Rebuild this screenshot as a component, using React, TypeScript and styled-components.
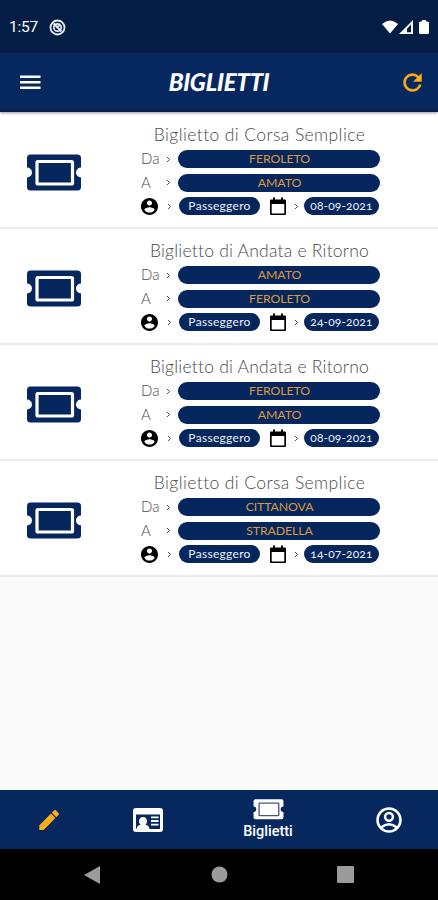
import React from "react";
import styled, { createGlobalStyle } from "styled-components";

const NAVY = "#06265e";
const BAR = "#07285f";
const GOLD = "#fcae17";

const GlobalStyle = createGlobalStyle`
  * { box-sizing: border-box; }
  body { margin: 0; background: #fafafa; font-family: Lato, "Liberation Sans", sans-serif; }
`;

const Screen = styled.div`
  width: 438px;
  height: 900px;
  display: flex;
  flex-direction: column;
  background: #fafafa;
  overflow: hidden;
`;

const StatusBar = styled.div`
  height: 53px;
  flex: none;
  padding: 1px 7px 0 9px;
  display: flex;
  align-items: center;
  background: #051e45;
  color: #fff;
  font: 400 15.5px Roboto, sans-serif;
  svg { display: block; }
`;

const Clock = styled.span`
  width: 40px;
  letter-spacing: -0.2px;
`;

const StatusIcons = styled.div`
  margin-left: auto;
  display: flex;
  align-items: center;
`;

const AppBar = styled.header`
  height: 59px;
  flex: none;
  display: grid;
  grid-template-columns: 42px 1fr 42px;
  align-items: center;
  padding: 0 12px 0 18px;
  background: ${BAR};
  border-bottom: 2px solid #052050;
  box-shadow: 0 1px 3px rgba(0, 0, 0, 0.4);
  z-index: 1;
  svg { display: block; }
  svg:last-child { justify-self: end; margin-top: 2px; }
`;

const Heading = styled.h1`
  margin: 0;
  text-align: center;
  color: #fff;
  font: italic 900 24.5px/30px Lato, sans-serif;
  letter-spacing: -0.2px;
  transform: translateX(-3px) scaleX(0.97) skewX(-2deg);
`;

const List = styled.main`
  flex: 1;
  padding-top: 1px;
`;

const Card = styled.article`
  height: 116px;
  display: grid;
  grid-template-columns: 115px 239px;
  column-gap: 26px;
  background: #fff;
  border-bottom: 2px solid #ebebeb;
`;

const Emblem = styled.div`
  padding: 41px 0 0 26px;
  svg { display: block; }
`;

const Details = styled.div`
  padding-top: 12px;
`;

const CardTitle = styled.h2<{ $spacing: number }>`
  margin: 0 -10px 5px;
  padding-right: 2px;
  text-align: center;
  white-space: nowrap;
  color: #4b4b4b;
  font: 300 17.5px/20px Lato, sans-serif;
  letter-spacing: ${(p) => p.$spacing}px;
`;

const Route = styled.div`
  height: 18px;
  margin-bottom: 5.5px;
  display: grid;
  grid-template-columns: 25px 11.5px 202px;
  align-items: center;
`;

const Label = styled.span`
  margin-top: -2px;
  color: #505050;
  font: 300 15px/18px Lato, sans-serif;
`;

const Station = styled.span`
  height: 18px;
  border-radius: 9px;
  background: ${NAVY};
  color: #dc9a3c;
  text-align: center;
  font: 400 12.3px/18px Lato, sans-serif;
  letter-spacing: -0.1px;
  padding-left: 2px;
`;

const Meta = styled.div`
  height: 18px;
  margin-top: -0.5px;
  display: grid;
  grid-template-columns: 26px 12px 81px 10px 24px 10px 75px;
  align-items: center;
  svg { display: block; }
`;

const Tag = styled.span<{ $spacing: number }>`
  height: 18px;
  border-radius: 9px;
  background: ${NAVY};
  color: #f0f2fa;
  text-align: center;
  white-space: nowrap;
  font: 400 12px/17px Lato, sans-serif;
  font-variant-numeric: oldstyle-nums;
  letter-spacing: ${(p) => p.$spacing}px;
`;

const CalendarCell = styled.span`
  grid-column: 5;
  margin-left: -1px;
`;

const TabBar = styled.nav`
  height: 59px;
  flex: none;
  display: grid;
  grid-template-columns: 97px 102px 138px 103px;
  background: ${BAR};
`;

const Tab = styled.div`
  display: flex;
  flex-direction: column;
  align-items: center;
  justify-content: center;
  svg { display: block; }
`;

const TabLabel = styled.span`
  margin-top: 4px;
  color: #fff;
  font: 500 14.5px/16px Roboto, sans-serif;
`;

const SystemBar = styled.div`
  height: 51px;
  flex: none;
  display: flex;
  align-items: center;
  justify-content: space-between;
  padding: 0 84px 0 84px;
  background: #000;
`;

const Ticket = ({ w, h, color, hole, line }: { w: number; h: number; color: string; hole: string; line: number }) => (
  <svg width={w} height={h} viewBox="0 0 56 37">
    <path
      fill={color}
      d="M4.500.5h47a3.500 3.500 0 0 1 3.500 3.500v9.500a5 5 0 0 0 0 10V33a3.500 3.500 0 0 1-3.500 3.500h-47A3.500 3.500 0 0 1 1 33v-9.500a5 5 0 0 0 0-10V4A3.500 3.500 0 0 1 4.500.5Z"
    />
    <rect x="11" y="7.500" width="35.500" height="22.500" rx="1" fill="none" stroke={hole} strokeWidth={line} />
  </svg>
);

const Chevron = () => (
  <svg width="5" height="7" viewBox="0 0 5 7" fill="none" stroke="#4c4c4c" strokeWidth="1">
    <path d="m1 1 2.500 2.500L1 6" />
  </svg>
);

const Person = () => (
  <svg width="17" height="17" viewBox="2 2 20 20">
    <path d="M12 2C6.480 2 2 6.480 2 12s4.480 10 10 10 10-4.480 10-10S17.520 2 12 2zm0 3c1.660 0 3 1.340 3 3s-1.340 3-3 3-3-1.340-3-3 1.340-3 3-3zm0 14.200c-2.500 0-4.710-1.280-6-3.220.03-1.990 4-3.080 6-3.080 1.990 0 5.970 1.090 6 3.080-1.290 1.940-3.500 3.220-6 3.220z" />
  </svg>
);

const Calendar = () => (
  <svg width="18" height="19" viewBox="0 0 18 19">
    <path fillRule="evenodd" d="M4 .5h2v2h6v-2h2v2h2q1 0 1 1V17q0 1-1 1H2q-1 0-1-1V3.500q0-1 1-1h2ZM2.700 7v9.500h12.600V7Z" />
  </svg>
);

type TicketData = { title: string; from: string; to: string; date: string; spacing: number };

const tickets: TicketData[] = [
  { title: "Biglietto di Corsa Semplice", from: "FEROLETO", to: "AMATO", date: "08-09-2021", spacing: 0.4 },
  { title: "Biglietto di Andata e Ritorno", from: "AMATO", to: "FEROLETO", date: "24-09-2021", spacing: 0.23 },
  { title: "Biglietto di Andata e Ritorno", from: "FEROLETO", to: "AMATO", date: "08-09-2021", spacing: 0.23 },
  { title: "Biglietto di Corsa Semplice", from: "CITTANOVA", to: "STRADELLA", date: "14-07-2021", spacing: 0.4 },
];

export default function App() {
  return (
    <>
      <GlobalStyle />
      <Screen>
        <StatusBar>
          <Clock>1:57</Clock>
          <svg width="17" height="17" viewBox="0 0 17 17" fill="none" stroke="#e7eaf2">
            <circle cx="8.500" cy="8.500" r="7" strokeWidth="1.800" />
            <circle cx="8.500" cy="8.500" r="3.700" strokeWidth="1.700" />
            <path d="m4.500 4.500 8 8M8 7.500l3-1" strokeWidth="1.800" />
          </svg>
          <StatusIcons>
            <svg width="50" height="16" viewBox="0 0 50 16">
              <path fill="#fff" d="M1 5Q9-2 17 5L9 14.500Z" />
              <path fill="#fff" fillRule="evenodd" d="M18 15 32 1v14ZM26 13.200h4V5.500l-4 4.200Z" />
              <path fill="#fff" d="M41 1h4v1.500h1.500Q48 2.500 48 4v9.500q0 1.500-1.500 1.500h-7q-1.500 0-1.500-1.500V4q0-1.500 1.500-1.500H41Z" />
            </svg>
          </StatusIcons>
        </StatusBar>
        <AppBar>
          <svg width="24" height="20" viewBox="0 0 24 20" stroke="#fff" strokeWidth="2.400">
            <path d="M2 4.800h20.500M2 10.300h20.500M2 15.800h20.500" />
          </svg>
          <Heading>BIGLIETTI</Heading>
          <svg width="27" height="27" viewBox="0 0 24 24" fill={GOLD} stroke={GOLD} strokeWidth=".4">
            <path d="M17.650 6.350A7.958 7.958 0 0 0 12 4c-4.420 0-7.990 3.580-7.990 8s3.570 8 7.990 8c3.730 0 6.840-2.550 7.730-6h-2.080A5.990 5.990 0 0 1 12 18c-3.310 0-6-2.690-6-6s2.690-6 6-6c1.660 0 3.140.69 4.220 1.780L13 11h7V4l-2.350 2.350z" />
          </svg>
        </AppBar>
        <List>
          {tickets.map((t, i) => (
            <Card key={i}>
              <Emblem>
                <Ticket w={56} h={37} color={NAVY} hole="#fff" line={3.2} />
              </Emblem>
              <Details>
                <CardTitle $spacing={t.spacing}>{t.title}</CardTitle>
                <Route>
                  <Label>Da</Label>
                  <Chevron />
                  <Station>{t.from}</Station>
                </Route>
                <Route>
                  <Label>A</Label>
                  <Chevron />
                  <Station>{t.to}</Station>
                </Route>
                <Meta>
                  <Person />
                  <Chevron />
                  <Tag $spacing={0.3}>Passeggero</Tag>
                  <CalendarCell>
                    <Calendar />
                  </CalendarCell>
                  <Chevron />
                  <Tag $spacing={0.15}>{t.date}</Tag>
                </Meta>
              </Details>
            </Card>
          ))}
        </List>
        <TabBar>
          <Tab>
            <svg width="26" height="26" viewBox="0 0 24 24" fill={GOLD}>
              <path d="M3 17V21.200h4L17.900 10.200l-4.100-4.100L3 17zM20.900 7.200a1 1 0 0 0 0-1.500l-2.600-2.600a1 1 0 0 0-1.500 0l-2.200 2.200 4.100 4.100 2.200-2.200z" />
            </svg>
          </Tab>
          <Tab>
            <svg width="30" height="24" viewBox="0 0 30 24">
              <rect width="30" height="24" rx="3" fill="#fff" />
              <path fill={BAR} d="M3 6.500h24V21H16.500q-.5-4-4-4.300a4 4 0 1 0-5 0Q4 17 3.500 21H3Z" />
              <circle cx="10" cy="12.500" r="3.600" fill="#fff" />
              <path stroke="#fff" strokeWidth="1.800" d="M18 9.300h7.500M18 13h7.500M18 16.700h7.500" />
            </svg>
          </Tab>
          <Tab>
            <Ticket w={31} h={20.500} color="#fff" hole="#45557f" line={2.4} />
            <TabLabel>Biglietti</TabLabel>
          </Tab>
          <Tab>
            <svg width="26" height="26" viewBox="0 0 26 26" fill="none" stroke="#fff" strokeWidth="2.500">
              <circle cx="13" cy="13" r="11.500" />
              <circle cx="13" cy="9.800" r="3.900" />
              <path d="M5 20.500q8-6.500 16 0" />
            </svg>
          </Tab>
        </TabBar>
        <SystemBar>
          <svg width="17" height="20" viewBox="0 0 17 20">
            <path fill="#9b9b9b" d="M0 10 16 1v18Z" />
          </svg>
          <svg width="17" height="17" viewBox="0 0 17 17">
            <circle cx="8.500" cy="8.500" r="8" fill="#9b9b9b" />
          </svg>
          <svg width="17" height="17" viewBox="0 0 17 17">
            <rect width="17" height="17" rx="1" fill="#9b9b9b" />
          </svg>
        </SystemBar>
      </Screen>
    </>
  );
}
